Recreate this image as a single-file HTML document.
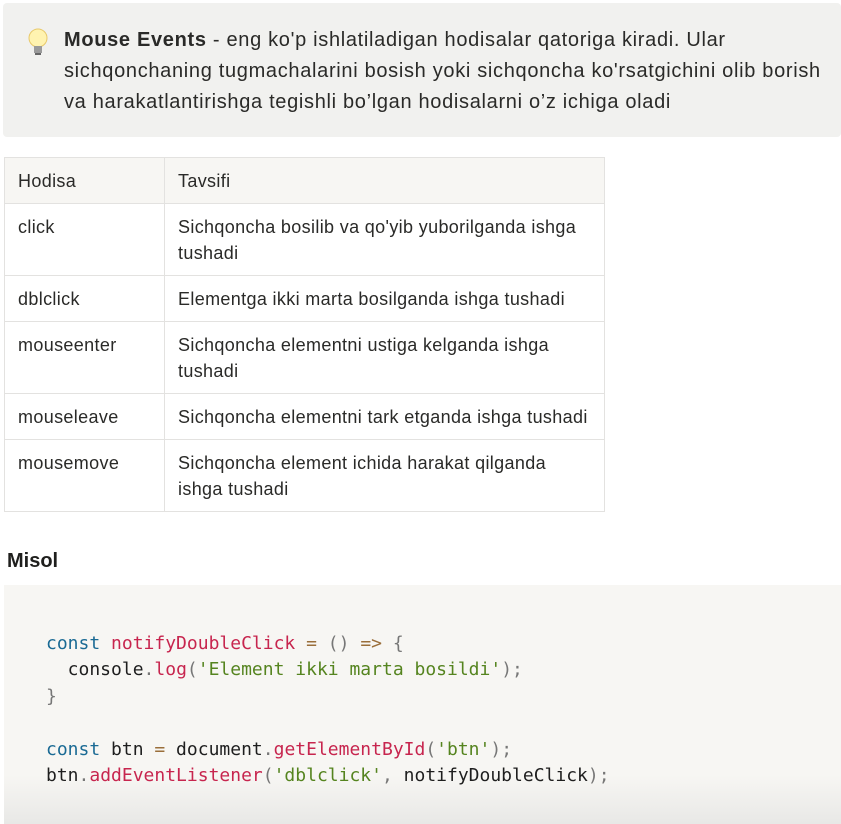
<!DOCTYPE html>
<html><head><meta charset="utf-8"><style>
body{margin:0;width:841px;height:824px;overflow:hidden;background:#fff;font-family:"Liberation Sans",sans-serif;color:#37352f;position:relative}
.call{position:absolute;left:3px;top:3px;width:838px;height:134px;background:#f1f1ef;border-radius:4px}
.call .t{position:absolute;left:61px;top:22px;font-size:20px;line-height:31px;width:790px;color:#2a2a28;letter-spacing:0.68px;white-space:nowrap}
.bulb{position:absolute;left:24px;top:25px}
table{position:absolute;left:4px;top:157px;border-collapse:collapse;font-size:18px;color:#2a2a28;letter-spacing:0.35px;table-layout:fixed;width:601px}
td{border:1px solid #e3e2e0;padding:10px 13px 9px 13px;vertical-align:top;line-height:26px;white-space:nowrap;overflow:hidden}
tr.h td{background:#f7f6f3}
td:first-child{width:133px}
.misol{position:absolute;left:7px;top:550px;font-size:20px;font-weight:bold;color:#1f1f1d}
.code{position:absolute;left:4px;top:585px;width:837px;height:239px;background:linear-gradient(#f7f6f3 0,#f7f6f3 190px,#e8e8e6 239px)}
pre{position:absolute;left:42px;top:46px;margin:0;font-family:"DejaVu Sans Mono",monospace;font-size:18px;line-height:26.4px;color:#1e1e1e}
.k{color:#1a6a94}.f{color:#c7254e}.s{color:#55841f}.p{color:#777}.o{color:#9a6e3a}
</style></head><body>
<div class="call">
<svg class="bulb" width="22" height="30" viewBox="0 0 22 30"><circle cx="11" cy="10" r="9" fill="#fff3b0" stroke="#e8c96a"/><rect x="7" y="18" width="8" height="7" fill="#9a9a9a"/><rect x="8" y="25" width="6" height="2" fill="#666"/></svg>
<div class="t"><b>Mouse Events</b> - eng ko'p ishlatiladigan hodisalar qatoriga kiradi. Ular<br>sichqonchaning tugmachalarini bosish yoki sichqoncha ko'rsatgichini olib borish<br>va harakatlantirishga tegishli bo’lgan hodisalarni o’z ichiga oladi</div>
</div>
<table>
<tr class="h"><td>Hodisa</td><td>Tavsifi</td></tr>
<tr><td>click</td><td>Sichqoncha bosilib va qo'yib yuborilganda ishga<br>tushadi</td></tr>
<tr><td>dblclick</td><td>Elementga ikki marta bosilganda ishga tushadi</td></tr>
<tr><td>mouseenter</td><td>Sichqoncha elementni ustiga kelganda ishga<br>tushadi</td></tr>
<tr><td>mouseleave</td><td>Sichqoncha elementni tark etganda ishga tushadi</td></tr>
<tr><td>mousemove</td><td>Sichqoncha element ichida harakat qilganda<br>ishga tushadi</td></tr>
</table>
<div class="misol">Misol</div>
<div class="code"><pre><span class="k">const</span> <span class="f">notifyDoubleClick</span> <span class="o">=</span> <span class="p">()</span> <span class="o">=&gt;</span> <span class="p">{</span>
  console<span class="p">.</span><span class="f">log</span><span class="p">(</span><span class="s">'Element ikki marta bosildi'</span><span class="p">);</span>
<span class="p">}</span>

<span class="k">const</span> btn <span class="o">=</span> document<span class="p">.</span><span class="f">getElementById</span><span class="p">(</span><span class="s">'btn'</span><span class="p">);</span>
btn<span class="p">.</span><span class="f">addEventListener</span><span class="p">(</span><span class="s">'dblclick'</span><span class="p">,</span> notifyDoubleClick<span class="p">);</span></pre></div>
</body></html>
